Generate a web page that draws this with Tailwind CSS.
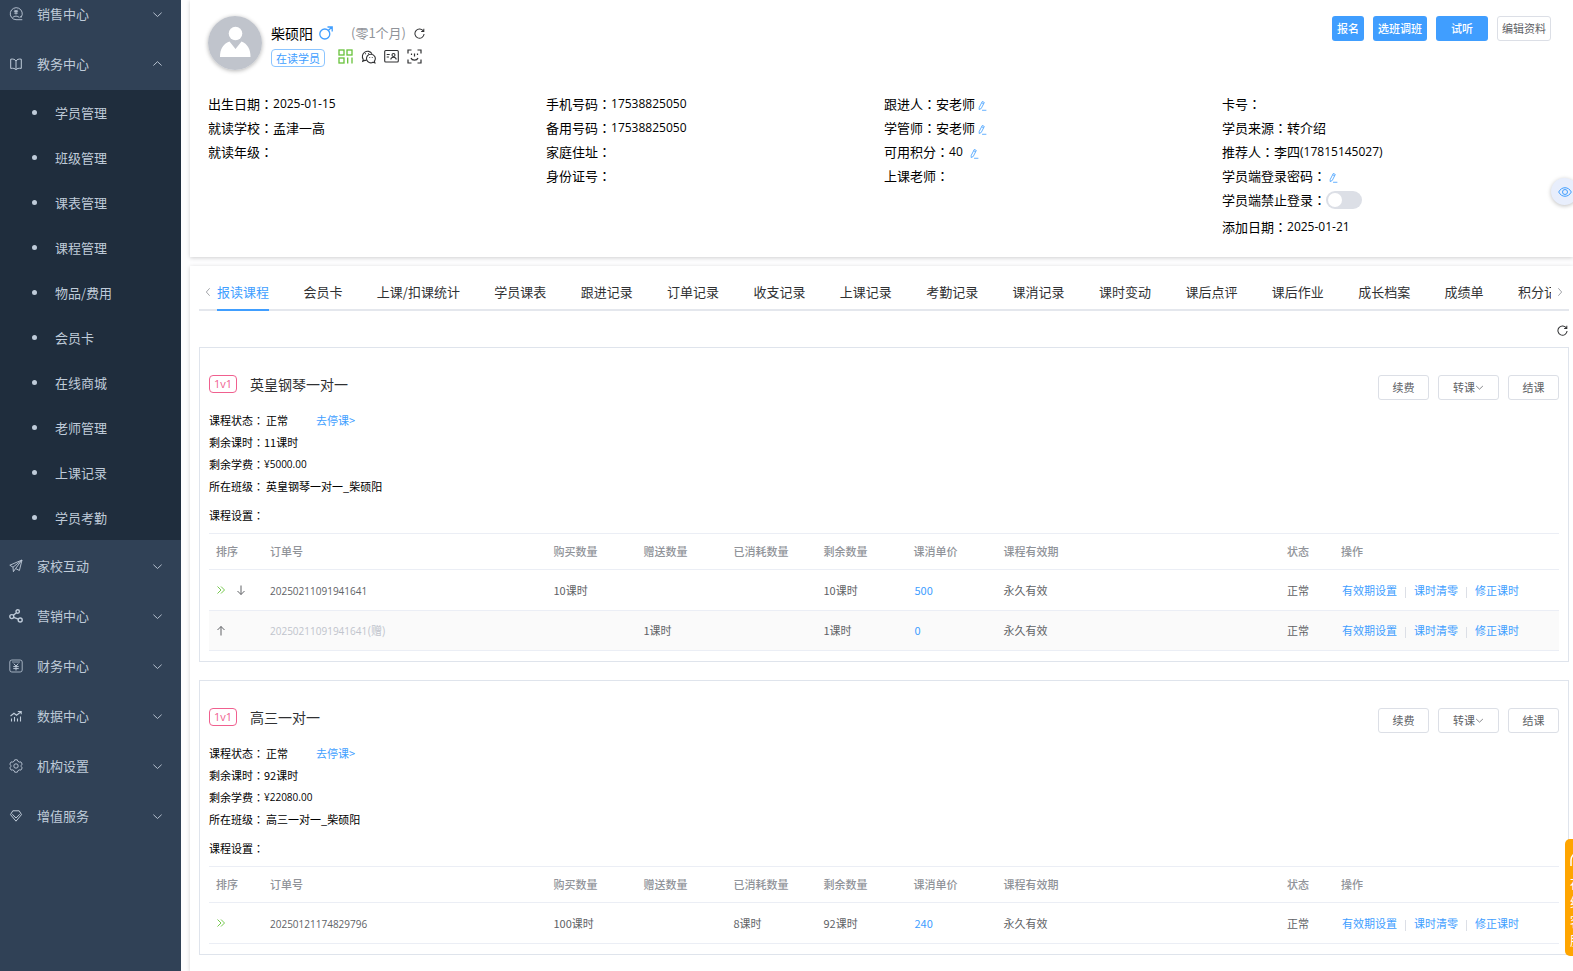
<!DOCTYPE html>
<html lang="zh-CN">
<head>
<meta charset="utf-8">
<title>学员详情</title>
<script src="https://cdn.jsdelivr.net/npm/@tailwindcss/browser@4"></script>
</head>
<body class="flex h-screen overflow-hidden bg-[#fdfdfe] font-['Noto_Sans_CJK_SC',sans-serif] text-[13px] text-black">

<svg class="hidden">
  <symbol id="i-down" viewBox="0 0 12 12"><path d="M1.5 4 6 8.2 10.5 4" fill="none" stroke="currentColor"/></symbol>
  <symbol id="i-up" viewBox="0 0 12 12"><path d="M1.5 8.2 6 4l4.500 4.200" fill="none" stroke="currentColor"/></symbol>
  <symbol id="i-left" viewBox="0 0 12 12"><path d="M8 1.500 4 6l4 4.500" fill="none" stroke="currentColor"/></symbol>
  <symbol id="i-right" viewBox="0 0 12 12"><path d="M4 1.500 8 6l-4 4.500" fill="none" stroke="currentColor"/></symbol>
  <symbol id="i-refresh" viewBox="0 0 12 12"><path d="M10.300 3.600A5 5 0 1 0 11 6.600M10.700.8v3H7.800" fill="none" stroke="currentColor" stroke-width="1.100"/></symbol>
  <symbol id="i-edit" viewBox="0 0 10 12"><path d="M4.800 1.500 7 2.600 3.600 9.300 1.300 10.500 1.400 8.100Z M4.200 3 6.300 4.100M4.500 11.300H9.300" fill="none" stroke="currentColor" stroke-width=".9"/></symbol>
  <symbol id="i-sales" viewBox="0 0 14 14"><path d="M12.200 10.100A6 6 0 1 0 7 12.700h6.300M3.500 10.700a4.600 4.600 0 0 1 7 0M7 3.200v4.300M4.900 4.300h4.200M5.500 2.800l1.500 1.700 1.500-1.700M5.200 6.100h3.600M11.200 9.200l1 1.700" fill="none" stroke="currentColor" stroke-width=".9"/></symbol>
  <symbol id="i-book" viewBox="0 0 14 14"><path d="M7 4C6.200 2.400 4 1.700 1.700 2.200v9.200C4 11 6.200 11.400 7 12.800c.8-1.400 3-1.800 5.300-1.400V2.200C10 1.700 7.800 2.400 7 4Zm0 0v8.800" fill="none" stroke="currentColor"/></symbol>
  <symbol id="i-plane" viewBox="0 0 14 14"><path d="M.8 6.200 13 1l-2.600 10.500-3.800-2L4.400 12.700 4 8.200ZM4 8.200 13 1 6.600 9.500" fill="none" stroke="currentColor" stroke-width=".9"/></symbol>
  <symbol id="i-share" viewBox="0 0 14 14"><g fill="none" stroke="currentColor" stroke-width="1.400"><circle cx="2.800" cy="7.600" r="2"/><circle cx="8.700" cy="2.500" r="1.700"/><circle cx="11.200" cy="11" r="2"/><path d="M4.300 6.300 7.500 3.800M4.700 8.300l4.600 1.900"/></g></symbol>
  <symbol id="i-money" viewBox="0 0 14 14"><g fill="none" stroke="currentColor"><rect x=".8" y="1" width="12.400" height="12" rx="2" stroke-width=".8"/><path d="M3 3h8" stroke-width=".7"/><path d="M4.800 4.600 7 7.200l2.200-2.600M7 7.200v4.300M4.300 7.600h5.400M4.300 9.600h5.400"/></g></symbol>
  <symbol id="i-chart" viewBox="0 0 14 14"><path d="M2.500 12.500V9.500M5.500 12.500V8M8.500 12.500V9.500M11.500 12.500V7.500M1.500 7 5 4.200l2.500 2L12 2.700M8.800 2.500H12.200V5.300" fill="none" stroke="currentColor" stroke-width="1.100"/></symbol>
  <symbol id="i-gear" viewBox="0 0 14 14"><g fill="none" stroke="currentColor" stroke-width=".9"><path d="M5.700.8h2.600l.6 1.500 1.400.8 1.600-.2 1.300 2.200L12.200 6.400v1.200l1 1.300-1.300 2.200-1.600-.2-1.400.8-.6 1.500H5.700l-.6-1.500-1.400-.8-1.600.2L.8 8.900l1-1.300V6.400l-1-1.300L2.100 2.900l1.600.2 1.400-.8Z"/><circle cx="7" cy="7" r="2.200"/></g></symbol>
  <symbol id="i-gem" viewBox="0 0 14 14"><path d="M3.800 1.800h6.400L12.500 5.600 7 12.200 1.500 5.600ZM3.300 5.200 7 9l3.700-3.800" fill="none" stroke="currentColor"/></symbol>
</svg>

<nav class="flex w-[181px] shrink-0 flex-col bg-[#304156] text-[#bfcbd9]" aria-label="主菜单" id="menu"></nav>

<main class="ml-[9px] flex min-w-0 flex-1 flex-col gap-[9px]">
  <section class="h-[257px] shrink-0 bg-white pl-[18px] shadow-[0_1px_4px_rgba(0,0,0,0.18)]">
    <header class="flex items-start justify-between pt-4 pr-[22px]">
      <div class="flex gap-[9px]">
        <svg class="size-[54px] rounded-full shadow-[0_1px_4px_rgba(0,0,0,0.3)]" viewBox="0 0 54 54"><rect width="54" height="54" fill="#c0c4cc"/><circle cx="27.500" cy="17.500" r="6.800" fill="#fff"/><path d="M12 41c0-8 3-13 9.500-15.500L27.500 33l6-7.500C39.500 28 42.500 33 42.500 41Z" fill="#fff"/></svg>
        <div class="pt-[6px]">
          <div class="flex h-[22px] items-center">
            <h1 class="text-sm">柴硕阳</h1>
            <svg class="ml-[6px] size-[14px] text-[#409eff]" viewBox="0 0 14 14"><g fill="none" stroke="currentColor" stroke-width="1.300"><circle cx="5.800" cy="8" r="5"/><path d="M9.300 4.500 13 1M8.500 1H13.200V5.500"/></g></svg>
            <span class="ml-[18px] text-[#909399]">(零1个月)</span>
            <button class="ml-[8px]" aria-label="刷新"><svg class="size-[11px] text-[#303133]"><use href="#i-refresh"/></svg></button>
          </div>
          <div class="mt-[5px] flex items-start">
            <span class="flex h-[18px] items-center rounded-[4px] border border-[#8cc5ff] px-[4px] text-[11px] text-[#409eff]">在读学员</span>
            <div class="ml-[13px] flex items-center gap-[8px] text-[#303133]">
              <svg class="size-[15px] text-[#67c23a]" viewBox="0 0 15 15"><g fill="none" stroke="currentColor" stroke-width="1.300"><rect x="1" y="1" width="5" height="5"/><rect x="9" y="1" width="5" height="5"/><rect x="1" y="9" width="5" height="5"/><path d="M9.700 14.500V8.500M14 14.500V8.500"/></g></svg>
              <svg class="size-[15px]" viewBox="0 0 15 15"><g fill="none" stroke="currentColor" stroke-width="1.100"><path d="M5.600 11.400H3.700l-2 .9.500-2A5.200 5.200 0 1 1 11 4.700"/><path d="M9.800 5.200a4.300 4.300 0 1 0 2.200 8l1.900.7-.5-1.800a4.300 4.300 0 0 0-3.600-6.900Z"/><path d="M4.500 4.300v.9M7.500 4.300v.9M8.700 8v.8M11.300 8v.8"/></g></svg>
              <svg class="size-[15px]" viewBox="0 0 15 15"><g fill="none" stroke="currentColor" stroke-width="1.100"><rect x=".7" y="1.500" width="13.600" height="11.500" rx="1"/><circle cx="9.500" cy="6" r="1.500"/><path d="M6.800 10.500c.2-3 5.200-3 5.400 0M2.700 5.500h3M2.700 8h2.200"/></g></svg>
              <svg class="size-[15px]" viewBox="0 0 15 15"><g fill="none" stroke="currentColor" stroke-width="1.200"><path d="M1 4.500V1h3.500M10.500 1H14v3.500M14 10.500V14h-3.500M4.500 14H1v-3.500M4.500 4.500V6M10.500 4.500V6M7.500 4.500v3M4 9c1 2.800 6 2.800 7 0"/></g></svg>
            </div>
          </div>
        </div>
      </div>
      <div class="flex gap-[9px] text-[11px]">
        <button class="h-[25px] rounded-[3px] bg-[#409eff] px-[5px] font-medium text-white">报名</button>
        <button class="h-[25px] rounded-[3px] bg-[#409eff] px-[5px] font-medium text-white">选班调班</button>
        <button class="h-[25px] rounded-[3px] bg-[#409eff] px-[15px] font-medium text-white">试听</button>
        <button class="h-[25px] rounded-[3px] border border-[#dcdfe6] px-[4px] text-[#606266]">编辑资料</button>
      </div>
    </header>
    <div class="mt-[22px] grid grid-cols-4 pr-[13px]" id="info"></div>
  </section>

  <section class="min-h-0 flex-1 overflow-hidden bg-white pl-[9px] shadow-[0_1px_4px_rgba(0,0,0,0.18)]">
    <div class="mr-1 flex h-[45px] border-b-2 border-[#e4e7ed] pt-[9px]">
      <button class="flex w-[18px] shrink-0 items-center justify-center text-[#909399]" aria-label="向左滚动"><svg class="size-[10px]"><use href="#i-left"/></svg></button>
      <div class="-mb-[2px] min-w-0 flex-1 overflow-hidden">
        <div class="flex h-full w-[calc(100%+19px)] justify-between" role="tablist" id="tabs"></div>
      </div>
      <button class="flex w-[18px] shrink-0 items-center justify-center text-[#909399]" aria-label="向右滚动"><svg class="size-[10px]"><use href="#i-right"/></svg></button>
    </div>
    <div class="flex h-[36px] items-center justify-end pt-[3px] pr-[5px]">
      <button aria-label="刷新课程"><svg class="size-[11px] text-[#303133]"><use href="#i-refresh"/></svg></button>
    </div>
    <div class="mr-1 flex flex-col gap-[18px]" id="courses"></div>
  </section>
</main>

<button class="fixed top-[178px] -right-[5px] flex size-[27px] items-center justify-center rounded-full bg-[#e8eefc] text-[#409eff] shadow-[0_1px_4px_rgba(0,0,0,0.25)]" aria-label="显示信息">
  <svg class="size-[14px]" viewBox="0 0 14 14"><g fill="none" stroke="currentColor"><path d="M.7 7C3.500 1.300 10.500 1.300 13.300 7 10.500 12.700 3.500 12.700.7 7Z"/><circle cx="7" cy="7" r="2.500"/></g></svg>
</button>
<aside class="fixed right-0 bottom-[15px] h-[117px] w-2 overflow-hidden rounded-l-[5px] bg-[#ffa500] pt-3 pl-[5px] text-white">
  <svg class="h-4 w-4" viewBox="0 0 16 16"><path d="M1 15V9a7 7 0 0 1 14 0v6" fill="none" stroke="currentColor" stroke-width="1.500"/></svg>
  <div class="mt-[6px] w-4 text-[13px] leading-[19px]">在线客服</div>
</aside>

<script>
const icon = (id, cls) => `<svg class="${cls}"><use href="#${id}"/></svg>`;
const colon = `<span lang="zh-TW" class="font-['Noto_Sans_CJK_TC']">：</span>`;

/* sidebar */
const subs = ['学员管理','班级管理','课表管理','课程管理','物品/费用','会员卡','在线商城','老师管理','上课记录','学员考勤'];
const group = (ic, name, cls, arrow) => `<a href="#" class="flex shrink-0 items-center pl-[9px] pr-[18px] ${cls}">${icon(ic, 'mr-[14px] size-[14px] shrink-0')}<span class="flex-1">${name}</span>${icon(arrow, 'size-[11px]')}</a>`;
document.getElementById('menu').innerHTML =
  group('i-sales', '销售中心', 'h-[39px] pb-[11px]', 'i-down') +
  group('i-book', '教务中心', 'h-[51px] pb-[2px]', 'i-up') +
  `<ul class="bg-[#1f2d3d] mb-[1px]">` + subs.map(s => `<li><a href="#" class="flex h-[45px] items-center pl-[32px]"><span class="mr-[18px] size-[5px] rounded-full bg-current"></span>${s}</a></li>`).join('') + `</ul>` +
  [['i-plane','家校互动'],['i-share','营销中心'],['i-money','财务中心'],['i-chart','数据中心'],['i-gear','机构设置'],['i-gem','增值服务']]
    .map(([ic, n]) => group(ic, n, 'h-[50px]', 'i-down')).join('');

/* student info */
const num = t => `<span class="font-['Open_Sans'] text-[12px]">${t}</span>`;
const edit = name => `<button class="ml-[3px] text-[#409eff]" aria-label="${name}">${icon('i-edit', 'mt-[2px] h-[11px] w-[9px]')}</button>`;
const row = (label, value = '') => `<div class="flex h-6 items-center"><dt>${label}${colon}</dt><dd class="flex items-center">${value}</dd></div>`;
document.getElementById('info').innerHTML = [
  row('出生日期', num('2025-01-15')) + row('就读学校', '孟津一高') + row('就读年级'),
  row('手机号码', num('17538825050')) + row('备用号码', num('17538825050')) + row('家庭住址') + row('身份证号'),
  row('跟进人', '安老师' + edit('修改跟进人')) + row('学管师', '安老师' + edit('修改学管师')) + row('可用积分', num('40') + `<span class="w-1"></span>` + edit('修改积分')) + row('上课老师'),
  row('卡号') + row('学员来源', '转介绍') + row('推荐人', '李四' + num('(17815145027)')) + row('学员端登录密码', edit('修改密码')) +
  `<div class="flex h-6 items-center"><dt><label for="ban">学员端禁止登录</label>${colon}</dt><dd class="flex items-center"><input id="ban" type="checkbox" role="switch" class="h-[18px] w-9 appearance-none rounded-full bg-[#dcdfe6] before:m-[2px] before:block before:size-[14px] before:rounded-full before:bg-white checked:bg-[#409eff]"></dd></div>` +
  `<div class="pt-[3px]">${row('添加日期', num('2025-01-21'))}</div>`
].map(c => `<dl>${c}</dl>`).join('');

/* tabs */
document.getElementById('tabs').innerHTML = ['报读课程','会员卡','上课/扣课统计','学员课表','跟进记录','订单记录','收支记录','上课记录','考勤记录','课消记录','课时变动','课后点评','课后作业','成长档案','成绩单','积分记录']
  .map((t, i) => `<button role="tab" aria-selected="${i === 0}" class="shrink-0 border-b-2 ${i === 0 ? 'border-[#409eff] text-[#409eff]' : 'border-transparent text-[#303133]'}">${t}</button>`).join('');

/* courses */
const btn = (t, cls) => `<button class="flex h-[25px] items-center justify-center rounded-[3px] border border-[#dcdfe6] text-[#606266] ${cls}">${t}</button>`;
const line = (label, value, cls) => `<div class="flex h-[22px] items-center ${cls || ''}"><span>${label}${colon}</span>${value}</div>`;
const heads = [['排序','w-[54px]'],['订单号',''],['购买数量','w-[90px]'],['赠送数量','w-[90px]'],['已消耗数量','w-[90px]'],['剩余数量','w-[90px]'],['课消单价','w-[90px]'],['课程有效期',''],['状态','w-[54px]'],['操作','w-[225px]']];
const ops = ['有效期设置','课时清零','修正课时'].map(t => `<a href="#" class="text-[#409eff]">${t}</a>`).join('<span class="mt-1 h-[11px] w-px bg-[#dcdfe6]"></span>');
const orderRow = (r, i) => `<tr class="border-b border-[#ebeef5] ${i % 2 ? 'h-[40px] bg-[#fafafa]' : 'h-[41px]'}">
  <td class="pl-[7px]"><div class="flex items-center gap-[10px]">${r.sort}</div></td>
  <td class="pl-[7px] ${r.gift ? 'text-[#c0c4cc]' : ''}"><span class="font-['Open_Sans'] text-[10px]">${r.no}</span>${r.gift ? '(赠)' : ''}</td>
  ${r.qty.map(q => `<td class="pl-[7px]">${q}</td>`).join('')}
  <td class="pl-[8px]"><a href="#" class="text-[#409eff]">${r.price}</a></td>
  <td class="pl-[7px]">永久有效</td><td class="pl-[7px]">正常</td>
  <td class="pl-[8px]"><div class="flex items-center gap-[8px]">${ops}</div></td></tr>`;
const chevrons = '<svg class="size-[10px] text-[#67c23a]" viewBox="0 0 10 10"><path d="M1.500 1.500 5 5 1.500 8.500M5 1.500 8.500 5 5 8.500" fill="none" stroke="currentColor" stroke-width=".9"/></svg>';
const arrow = (name, d) => `<button aria-label="${name}"><svg class="size-[10px]" viewBox="0 0 10 10"><path d="${d}" fill="none" stroke="currentColor" stroke-width="1"/></svg></button>`;
const courses = [
  { name: '英皇钢琴一对一', left: '11课时', fee: '¥5000.00', orders: [
    { sort: chevrons + arrow('下移', 'M5 .5v9M1.500 6 5 9.500 8.500 6'), no: '20250211091941641', qty: ['10课时', '', '', '10课时'], price: 500 },
    { sort: arrow('上移', 'M5 9.500v-9M1.500 4 5 .5 8.500 4'), no: '20250211091941641', gift: true, qty: ['', '1课时', '', '1课时'], price: 0 }] },
  { name: '高三一对一', left: '92课时', fee: '¥22080.00', orders: [
    { sort: chevrons, no: '20250121174829796', qty: ['100课时', '', '8课时', '92课时'], price: 240 }] }
];
document.getElementById('courses').innerHTML = courses.map(c => `<article class="border border-[#dfe4ec] px-[9px] pt-[27px] pb-[10px] text-[11px]">
  <div class="flex h-[25px] justify-between">
    <div class="flex h-[18px] items-center"><span class="flex h-[18px] w-7 items-center justify-center rounded-[4px] border border-[#f0608f] font-['Open_Sans'] text-[#f0608f]">1v1</span><h2 class="ml-[13px] text-sm text-[#303133]">${c.name}</h2></div>
    <div class="flex gap-[9px]">${btn('续费', 'w-[51px]')}${btn('转课' + icon('i-down', 'size-[9px]'), 'w-[61px]')}${btn('结课', 'w-[51px]')}</div>
  </div>
  <div class="mt-[9px]">
    ${line('课程状态', '<span class="ml-[2px]">正常</span><a href="#" class="ml-[28px] text-[#409eff]">去停课&gt;</a>')}
    ${line('剩余课时', c.left)}
    ${line('剩余学费', `<span class="font-['Open_Sans'] text-[10px]">${c.fee}</span>`)}
    ${line('所在班级', `<span class="ml-[2px]">${c.name}_柴硕阳</span>`)}
    ${line('课程设置', '', 'mt-[7px]')}
  </div>
  <table class="mt-[7px] w-full table-fixed border-collapse text-left text-[#606266]">
    <thead><tr class="h-[36px] border-y border-[#ebeef5] text-[#909399]">${heads.map(([h, w]) => `<th class="pl-[7px] font-medium ${w}">${h}</th>`).join('')}</tr></thead>
    <tbody>${c.orders.map(orderRow).join('')}</tbody>
  </table>
</article>`).join('');
</script>
</body>
</html>
